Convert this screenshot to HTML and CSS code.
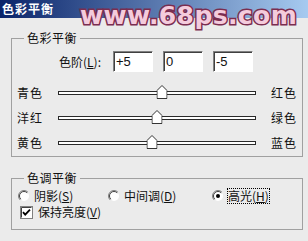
FILE: index.html
```html
<!DOCTYPE html>
<html lang="zh">
<head>
    <meta charset="UTF-8" />
    <title>色彩平衡</title>
    <link rel="stylesheet" href="styles.css">
</head>
<body>
<div class="window">
    <div class="titlebar">色彩平衡</div>
    <div class="watermark">www.68ps.com</div>

    <fieldset class="group group-balance">
        <legend>色彩平衡</legend>
        <div class="levels">
            <label>色阶(<u>L</u>):</label>
            <input class="num" value="+5">
            <input class="num" value="0">
            <input class="num" value="-5">
        </div>
        <div class="sliders">
            <div class="slider-row">
                <span>青色</span>
                <div class="track">
                    <svg class="thumb" style="left: 52.5%" width="11" height="14" viewBox="0 0 11 14"><path d="M0.5 5.5L5.5 0.5L10.5 5.5V13.5H0.5Z"/></svg>
                </div>
                <span class="right">红色</span>
            </div>
            <div class="slider-row">
                <span>洋红</span>
                <div class="track">
                    <svg class="thumb" style="left: 50%" width="11" height="14" viewBox="0 0 11 14"><path d="M0.5 5.5L5.5 0.5L10.5 5.5V13.5H0.5Z"/></svg>
                </div>
                <span class="right">绿色</span>
            </div>
            <div class="slider-row">
                <span>黄色</span>
                <div class="track">
                    <svg class="thumb" style="left: 47.5%" width="11" height="14" viewBox="0 0 11 14"><path d="M0.5 5.5L5.5 0.5L10.5 5.5V13.5H0.5Z"/></svg>
                </div>
                <span class="right">蓝色</span>
            </div>
        </div>
    </fieldset>

    <fieldset class="group group-tone">
        <legend>色调平衡</legend>
        <div class="tone-row">
            <label class="radio">
                <svg width="12" height="12" viewBox="0 0 12 12">
                    <circle cx="6" cy="6" r="5" fill="#fff"/>
                    <path d="M2.1 9.9A5.5 5.5 0 0 1 9.9 2.1" stroke="#808080"/>
                    <path d="M2.8 9.2A4.5 4.5 0 0 1 9.2 2.8" stroke="#404040"/>
                </svg>
                <span>阴影(<u>S</u>)</span>
            </label>
            <label class="radio">
                <svg width="12" height="12" viewBox="0 0 12 12">
                    <circle cx="6" cy="6" r="5" fill="#fff"/>
                    <path d="M2.1 9.9A5.5 5.5 0 0 1 9.9 2.1" stroke="#808080"/>
                    <path d="M2.8 9.2A4.5 4.5 0 0 1 9.2 2.8" stroke="#404040"/>
                </svg>
                <span>中间调(<u>D</u>)</span>
            </label>
            <label class="radio">
                <svg width="12" height="12" viewBox="0 0 12 12">
                    <circle cx="6" cy="6" r="5" fill="#fff"/>
                    <path d="M2.1 9.9A5.5 5.5 0 0 1 9.9 2.1" stroke="#808080"/>
                    <path d="M2.8 9.2A4.5 4.5 0 0 1 9.2 2.8" stroke="#404040"/>
                    <circle cx="6" cy="6" r="2" fill="#000"/>
                </svg>
                <span class="focus">高光(<u>H</u>)</span>
            </label>
        </div>
        <label class="check">
            <svg width="13" height="13" viewBox="0 0 13 13">
                <rect x="0.5" y="0.5" width="12" height="12" fill="#fff" stroke="#808080"/>
                <path d="M1.5 11.5V1.5H11.5" stroke="#404040"/>
                <path d="M3 6.2l2.2 2.4L10 3.6" stroke="#000" stroke-width="1.8"/>
            </svg>
            <span>保持亮度(<u>V</u>)</span>
        </label>
    </fieldset>
</div>
</body>
</html>
```

FILE: styles.css
```css
body {
    margin: 0;
    background: #ebebeb;
    font-family: "Noto Sans CJK SC", "Liberation Sans", sans-serif;
    font-size: 12px;
    line-height: 14px;
    color: #111;
}
.window {
    width: 308px;
    height: 241px;
    position: relative;
    overflow: hidden;
}
.titlebar {
    height: 18px;
    line-height: 18px;
    padding-left: 2px;
    background: linear-gradient(90deg, #0a246a, #a6caf0);
    color: #fff;
    font-weight: bold;
    letter-spacing: 1px;
}
.watermark {
    position: absolute;
    left: 80px;
    top: 2px;
    font-family: "DejaVu Sans", sans-serif;
    font-weight: bold;
    font-size: 25px;
    line-height: 28px;
    letter-spacing: 0.4px;
    color: #f4cbdc;
    -webkit-text-stroke: 3px #7a2d50;
    paint-order: stroke fill;
}
.group {
    margin: 0 0 0 11px;
    width: 292px;
    box-sizing: border-box;
    border: 1px solid #a0a0a0;
    padding: 0;
    min-width: 0;
}
.group legend {
    margin-left: 12px;
    padding: 0 3px;
    line-height: 14px;
    letter-spacing: 0.5px;
}
.group-balance {
    margin-top: 13px;
    height: 126px;
}
.group-tone {
    margin-top: 14px;
    height: 59px;
}
.levels {
    display: flex;
    align-items: center;
    padding: 6px 0 0 47px;
}
.levels label {
    width: 54px;
}
.num {
    width: 40px;
    height: 21px;
    box-sizing: border-box;
    margin: 0 10px 0 0;
    padding: 0 2px;
    border: 1px solid;
    border-color: #808080 #fff #fff #808080;
    box-shadow: inset 1px 1px #404040;
    background: #fff;
    font-family: "Liberation Sans", sans-serif;
    font-size: 13px;
    color: #111;
    outline: none;
}
.sliders {
    margin-top: 8px;
    padding-left: 5px;
}
.slider-row {
    display: grid;
    grid-template-columns: 41px 198px auto;
    align-items: center;
    height: 25px;
    letter-spacing: 1px;
}
.slider-row .right {
    margin-left: 15px;
}
.track {
    position: relative;
    height: 4px;
    box-sizing: border-box;
    border: 1px solid #2a2a2a;
    background: #fff;
}
.thumb {
    position: absolute;
    top: -7px;
    transform: translateX(-50%);
}
.thumb path {
    fill: #fff;
    stroke: #333;
}
.tone-row {
    display: grid;
    grid-template-columns: 90px 104px auto;
    align-items: center;
    height: 16px;
    padding: 3px 0 0 6px;
}
.radio, .check {
    display: flex;
    align-items: center;
    gap: 4px;
}
.radio path, .check path {
    fill: none;
}
.check {
    gap: 5px;
    height: 16px;
    padding-left: 8px;
}
.focus {
    outline: 1px dotted #000;
}
u {
    text-underline-offset: 1px;
}
```
